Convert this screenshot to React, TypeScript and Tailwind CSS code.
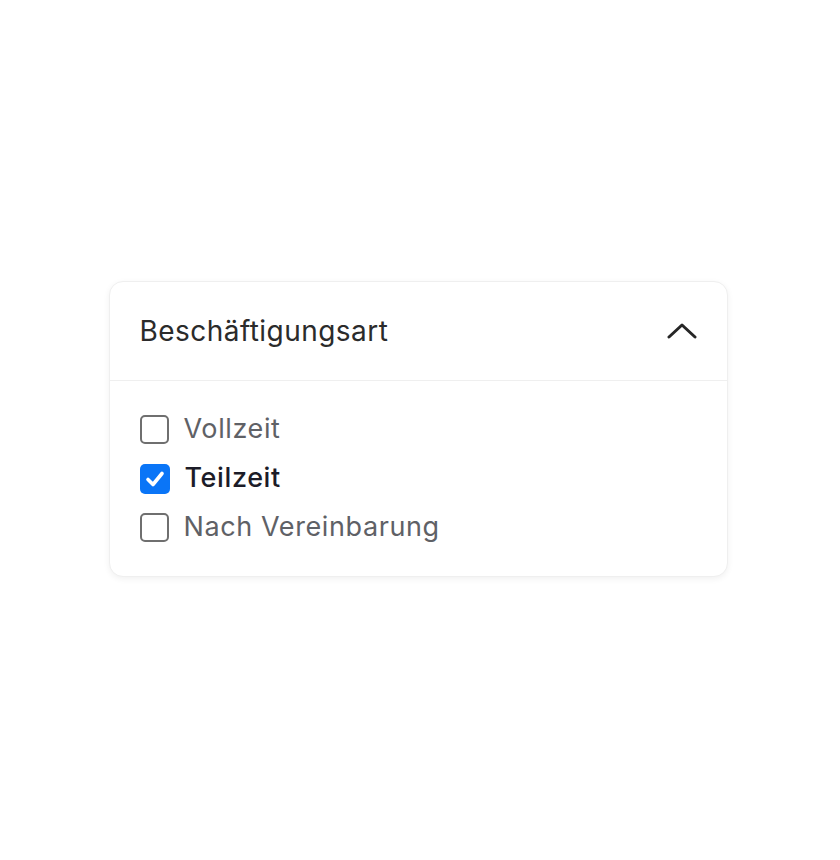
import React, { useState } from "react";

const items = [
  { label: "Vollzeit", checked: false },
  { label: "Teilzeit", checked: true },
  { label: "Nach Vereinbarung", checked: false },
];

export default function App() {
  const [state, setState] = useState(items);
  return (
    <div
      className="min-h-screen w-full bg-white flex items-center justify-center pr-[4px] pb-[2px]"
      style={{ fontFamily: "Inter, 'Noto Sans', sans-serif" }}
    >
      <div className="w-[619px] rounded-[14px] border border-[#efefef] bg-white shadow-[0_2px_6px_rgba(0,0,0,0.06)]">
        <div className="h-[99px] flex items-center justify-between pl-[30px] pr-[30px] border-b border-[#efefef]">
          <span className="text-[28px] text-[#2b2b2b] tracking-[0.45px]">Beschäftigungsart</span>
          <svg width="30" height="16" viewBox="0 0 30 16" fill="none">
            <path d="M2 14 L15 2 L28 14" stroke="#262626" strokeWidth="3" strokeLinecap="round" strokeLinejoin="round" />
          </svg>
        </div>
        <div className="pl-[30px] pt-[29px] pb-[29px] flex flex-col gap-[10px]">
          {state.map((it, i) => (
            <label
              key={it.label}
              className="h-[39px] flex items-center gap-[15px] cursor-pointer"
              onClick={() =>
                setState((s) => s.map((x, j) => (j === i ? { ...x, checked: !x.checked } : x)))
              }
            >
              {it.checked ? (
                <span className="w-[30px] h-[30px] rounded-[5px] bg-[#0a75f7] flex items-center justify-center">
                  <svg width="20" height="18" viewBox="0 0 20 18" fill="none">
                    <path d="M3 9.5 L8 14.5 L17 3.5" stroke="white" strokeWidth="3.6" strokeLinecap="round" strokeLinejoin="round" />
                  </svg>
                </span>
              ) : (
                <span className="w-[29px] h-[29px] rounded-[5px] border-2 border-[#6f6f6f] bg-white" />
              )}
              <span
                className={
                  "text-[27px] tracking-[0.6px] " +
                  (it.checked ? "text-[#1c1c28] font-medium" : "text-[#5f6166]")
                }
              >
                {it.label}
              </span>
            </label>
          ))}
        </div>
      </div>
    </div>
  );
}
